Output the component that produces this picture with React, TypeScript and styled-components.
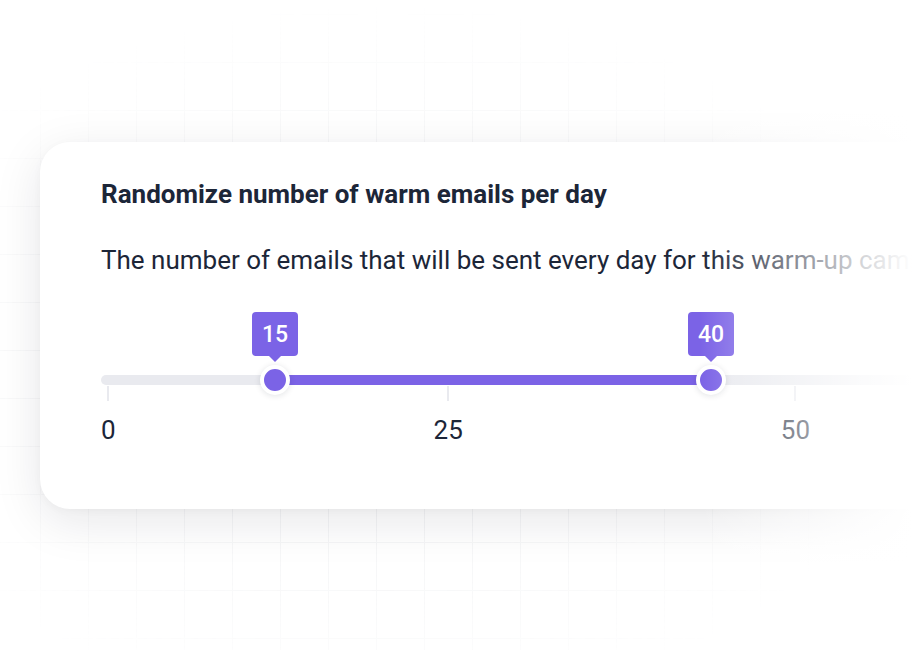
import React from 'react'
import styled, { createGlobalStyle } from 'styled-components'

const PURPLE = '#7b63e6'
const TRACK = '#e9eaef'
const INK = '#1c2638'

const GlobalStyle = createGlobalStyle`
  html, body {
    margin: 0;
    padding: 0;
    background: #ffffff;
  }
  body {
    font-family: Roboto, 'Liberation Sans', sans-serif;
    -webkit-font-smoothing: antialiased;
  }
`

const Scene = styled.div`
  position: relative;
  width: 912px;
  height: 650px;
  overflow: hidden;
  padding-top: 142px;
  padding-left: 40px;
  box-sizing: border-box;

  &::before {
    content: '';
    position: absolute;
    inset: 0;
    background-image: linear-gradient(to right, #eeeff1 1px, transparent 1px),
      linear-gradient(to bottom, #eeeff1 1px, transparent 1px);
    background-size: 48px 48px;
    background-position: 40px 14px;
    -webkit-mask-image: radial-gradient(ellipse 60% 55% at 42% 55%, #000 35%, transparent 100%);
    mask-image: radial-gradient(ellipse 60% 55% at 42% 55%, #000 35%, transparent 100%);
    opacity: 0.8;
  }
`

// the whole right side washes out to white
const FadeRight = styled.div`
  position: absolute;
  inset: 0;
  pointer-events: none;
  background: linear-gradient(
    to right,
    rgba(255, 255, 255, 0) 0px,
    rgba(255, 255, 255, 0) 700px,
    rgba(255, 255, 255, 0.8) 860px,
    #ffffff 912px
  );
`

const Card = styled.section`
  position: relative;
  width: 960px;
  background: #ffffff;
  border-radius: 30px;
  padding: 36px 0 63px 61px;
  box-sizing: border-box;
  box-shadow: 0 12px 48px rgba(17, 24, 39, 0.1), 0 2px 8px rgba(17, 24, 39, 0.03);
`

const Title = styled.h3`
  margin: 0;
  font-size: 26px;
  line-height: 32px;
  font-weight: 700;
  color: ${INK};
`

const Description = styled.p`
  margin: 34px 0 0;
  font-size: 26px;
  line-height: 32px;
  font-weight: 400;
  color: ${INK};
  white-space: nowrap;
`

const Slider = styled.div`
  position: relative;
  margin-top: 36px;
  padding-top: 63px;
`

const Track = styled.div`
  position: relative;
  height: 10px;
  width: 860px;
  border-radius: 5px;
  background: ${TRACK};
`

const Range = styled.div`
  position: absolute;
  top: 0;
  height: 10px;
  background: ${PURPLE};
`

const Scale = styled.div`
  width: 709px;
  display: flex;
  justify-content: space-between;
  margin-top: 1px;
`

const Step = styled.div`
  display: flex;
  flex-direction: column;
  align-items: center;
  gap: 13px;
`

const Tick = styled.div`
  width: 2px;
  height: 15px;
  background: ${TRACK};
`

const StepLabel = styled.span`
  font-size: 26px;
  line-height: 32px;
  color: ${INK};
`

const Handle = styled.div`
  position: absolute;
  top: 0;
  display: flex;
  flex-direction: column;
  align-items: center;
  transform: translateX(-50%);
`

const Bubble = styled.div`
  position: relative;
  width: 46px;
  height: 44px;
  border-radius: 4px;
  background: ${PURPLE};
  color: #ffffff;
  font-size: 23px;
  font-weight: 500;
  display: flex;
  align-items: center;
  justify-content: center;

  &::after {
    content: '';
    position: absolute;
    left: 50%;
    bottom: -6px;
    margin-left: -6px;
    border-left: 6px solid transparent;
    border-right: 6px solid transparent;
    border-top: 6px solid ${PURPLE};
  }
`

const Thumb = styled.div`
  margin-top: 9px;
  width: 22px;
  height: 22px;
  border-radius: 50%;
  background: ${PURPLE};
  border: 4px solid #ffffff;
  box-shadow: 0 1px 6px rgba(17, 24, 39, 0.12);
`

const steps = ['0', '25', '50']

// handle centres in px from the start of the track
const handles = [
  { value: 15, at: 174 },
  { value: 40, at: 610 },
]

export default function App() {
  const [low, high] = handles

  return (
    <>
      <GlobalStyle />
      <Scene>
        <Card>
          <Title>Randomize number of warm emails per day</Title>
          <Description>
            The number of emails that will be sent every day for this warm-up campaign
          </Description>
          <Slider>
            <Track>
              <Range style={{ left: low.at, width: high.at - low.at }} />
            </Track>
            <Scale>
              {steps.map((s) => (
                <Step key={s}>
                  <Tick />
                  <StepLabel>{s}</StepLabel>
                </Step>
              ))}
            </Scale>
            {handles.map((h) => (
              <Handle key={h.value} style={{ left: h.at }}>
                <Bubble>{h.value}</Bubble>
                <Thumb />
              </Handle>
            ))}
          </Slider>
        </Card>
        <FadeRight />
      </Scene>
    </>
  )
}
